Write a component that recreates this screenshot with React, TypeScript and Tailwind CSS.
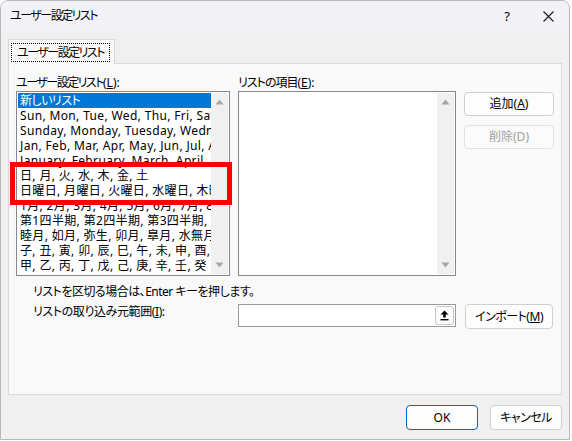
import React from "react";

const items = [
  "新しいリスト",
  "Sun, Mon, Tue, Wed, Thu, Fri, Sat",
  "Sunday, Monday, Tuesday, Wednesday, Thursday, Friday, Saturday",
  "Jan, Feb, Mar, Apr, May, Jun, Jul, Aug, Sep, Oct, Nov, Dec",
  "January, February, March, April, May, June, July, August, September, October, November, December",
  "日, 月, 火, 水, 木, 金, 土",
  "日曜日, 月曜日, 火曜日, 水曜日, 木曜日, 金曜日, 土曜日",
  "1月, 2月, 3月, 4月, 5月, 6月, 7月, 8月, 9月, 10月, 11月, 12月",
  "第1四半期, 第2四半期, 第3四半期, 第4四半期",
  "睦月, 如月, 弥生, 卯月, 皐月, 水無月, 文月, 葉月, 長月, 神無月, 霜月, 師走",
  "子, 丑, 寅, 卯, 辰, 巳, 午, 未, 申, 酉, 戌, 亥",
  "甲, 乙, 丙, 丁, 戊, 己, 庚, 辛, 壬, 癸",
];

function ScrollBar() {
  return (
    <div className="w-[17px] shrink-0 bg-[#f0f0f0] flex flex-col justify-between items-center py-[6px]">
      <svg width="9" height="6" viewBox="0 0 9 6">
        <path d="M0.5 5.5 L4.5 0.5 L8.5 5.5 Z" fill="#a6a6a6" />
      </svg>
      <svg width="9" height="6" viewBox="0 0 9 6">
        <path d="M0.5 0.5 L4.5 5.5 L8.5 0.5 Z" fill="#a6a6a6" />
      </svg>
    </div>
  );
}

export default function App() {
  return (
    <div className="relative w-[572px] h-[441px] bg-white font-['Noto_Sans','Noto_Sans_CJK_JP',sans-serif] [font-feature-settings:'palt'] text-[12px] text-black">
      <div className="w-[570px] h-[440px] rounded-t-[8px] border border-[#b9b9b9] bg-[#f0f0f0] flex flex-col overflow-hidden">
        {/* title bar */}
        <div className="h-[30px] shrink-0 bg-[#f3f3f7] flex items-center pl-[9px]">
          <span className="leading-[16px] whitespace-nowrap tracking-[-1.5px]">ユーザー設定リスト</span>
          <span className="ml-auto w-[20px] text-center text-[13px] leading-[16px]">?</span>
          <div className="ml-[25px] mr-[15px] w-[12px] flex items-center justify-center">
            <svg width="11" height="11" viewBox="0 0 11 11">
              <path d="M0.5 0.5 L10.5 10.5 M10.5 0.5 L0.5 10.5" stroke="#1a1a1a" strokeWidth="1.1" />
            </svg>
          </div>
        </div>
        {/* body */}
        <div className="flex-1 flex flex-col px-[7px] pt-[8px]">
          {/* tab */}
          <div className="relative z-10 -mb-px w-[107px] h-[25px] border border-b-0 border-[#d9d9d9] bg-[#f9f9f9] pt-[3px] pl-[2px]">
            <div className="w-[99px] h-[19px] border border-dotted border-black flex items-center pl-[5px] whitespace-nowrap overflow-hidden">
              <span className="leading-[16px] tracking-[-1.5px]">ユーザー設定リスト</span>
            </div>
          </div>
          {/* panel */}
          <div className="h-[332px] border border-[#d9d9d9] bg-[#f9f9f9] pt-[11px] px-[7px]">
            <div className="grid grid-cols-[214px_218px_90px] gap-x-[8px]">
              <div className="leading-[16px] h-[16px] whitespace-nowrap">
                <span className="tracking-[-1.5px]">ユーザー設定リスト</span>(<u>L</u>):
              </div>
              <div className="leading-[16px] h-[16px] whitespace-nowrap">
                <span className="tracking-[-1px]">リストの項目</span>(<u>E</u>):
              </div>
              <div />
              {/* left list */}
              <div className="h-[185px] border border-[#828790] bg-white flex p-px">
                <div className="flex-1 overflow-hidden [font-feature-settings:normal]">
                  {items.map((t, i) => (
                    <div
                      key={i}
                      className={
                        i === 0
                          ? "h-[15px] leading-[15px] whitespace-nowrap pl-[2px] tracking-[-0.5px] bg-[#0078d7] text-white [font-feature-settings:'palt']"
                          : "h-[15px] leading-[15px] whitespace-nowrap pl-[2px] tracking-[0.35px]"
                      }
                    >
                      {t}
                    </div>
                  ))}
                </div>
                <ScrollBar />
              </div>
              {/* right list */}
              <div className="h-[185px] border border-[#828790] bg-white flex justify-end p-px">
                <ScrollBar />
              </div>
              {/* buttons */}
              <div className="flex flex-col gap-[9px] pt-px">
                <button className="h-[24px] rounded-[4px] border border-[#d0d0d0] bg-[#fdfdfd] leading-[16px] whitespace-nowrap">
                  追加(<u>A</u>)
                </button>
                <button className="h-[24px] rounded-[4px] border border-[#e2e2e2] bg-[#fbfbfb] leading-[16px] text-[#a0a0a0] whitespace-nowrap">
                  削除(D)
                </button>
              </div>
            </div>
            <div className="mt-[8px] pl-[17px] leading-[16px] h-[16px] whitespace-nowrap tracking-[-0.5px]">
              リストを区切る場合は、Enter キーを押します。
            </div>
            <div className="mt-[4px] grid grid-cols-[214px_218px_90px] gap-x-[8px]">
              <div className="pl-[17px] leading-[16px] whitespace-nowrap tracking-[-0.4px]">
                リストの取り込み元範囲(<u>I</u>):
              </div>
              <div className="h-[23px] border border-[#9a9a9a] bg-white flex justify-end p-px">
                <div className="w-[19px] h-[19px] rounded-[3px] border border-[#c8c8c8] bg-[#fdfdfd] flex items-center justify-center">
                  <svg width="9" height="11" viewBox="0 0 9 11">
                    <path d="M4.5 0.5 L8.5 4.5 L5.8 4.5 L5.8 7.5 L3.2 7.5 L3.2 4.5 L0.5 4.5 Z" fill="#000" />
                    <rect x="0.5" y="9" width="8" height="1.4" fill="#000" />
                  </svg>
                </div>
              </div>
              <button className="ml-px w-[88px] h-[25px] rounded-[4px] border border-[#d0d0d0] bg-[#fdfdfd] leading-[16px] whitespace-nowrap tracking-[-0.5px]">
                インポート(<u>M</u>)
              </button>
            </div>
          </div>
          {/* bottom buttons */}
          <div className="mt-[10px] flex justify-end gap-[12px]">
            <button className="w-[72px] h-[25px] rounded-[4px] border border-[#0067c0] bg-[#fdfdfd] leading-[16px]">
              OK
            </button>
            <button className="w-[72px] h-[25px] rounded-[4px] border border-[#d0d0d0] bg-[#fdfdfd] leading-[16px] whitespace-nowrap tracking-[-0.5px]">
              キャンセル
            </button>
          </div>
        </div>
      </div>
      {/* red highlight box */}
      <div className="absolute left-[10px] top-[162px] w-[222px] h-[43px] border-[5px] border-[#ff0000] pointer-events-none" />
    </div>
  );
}
